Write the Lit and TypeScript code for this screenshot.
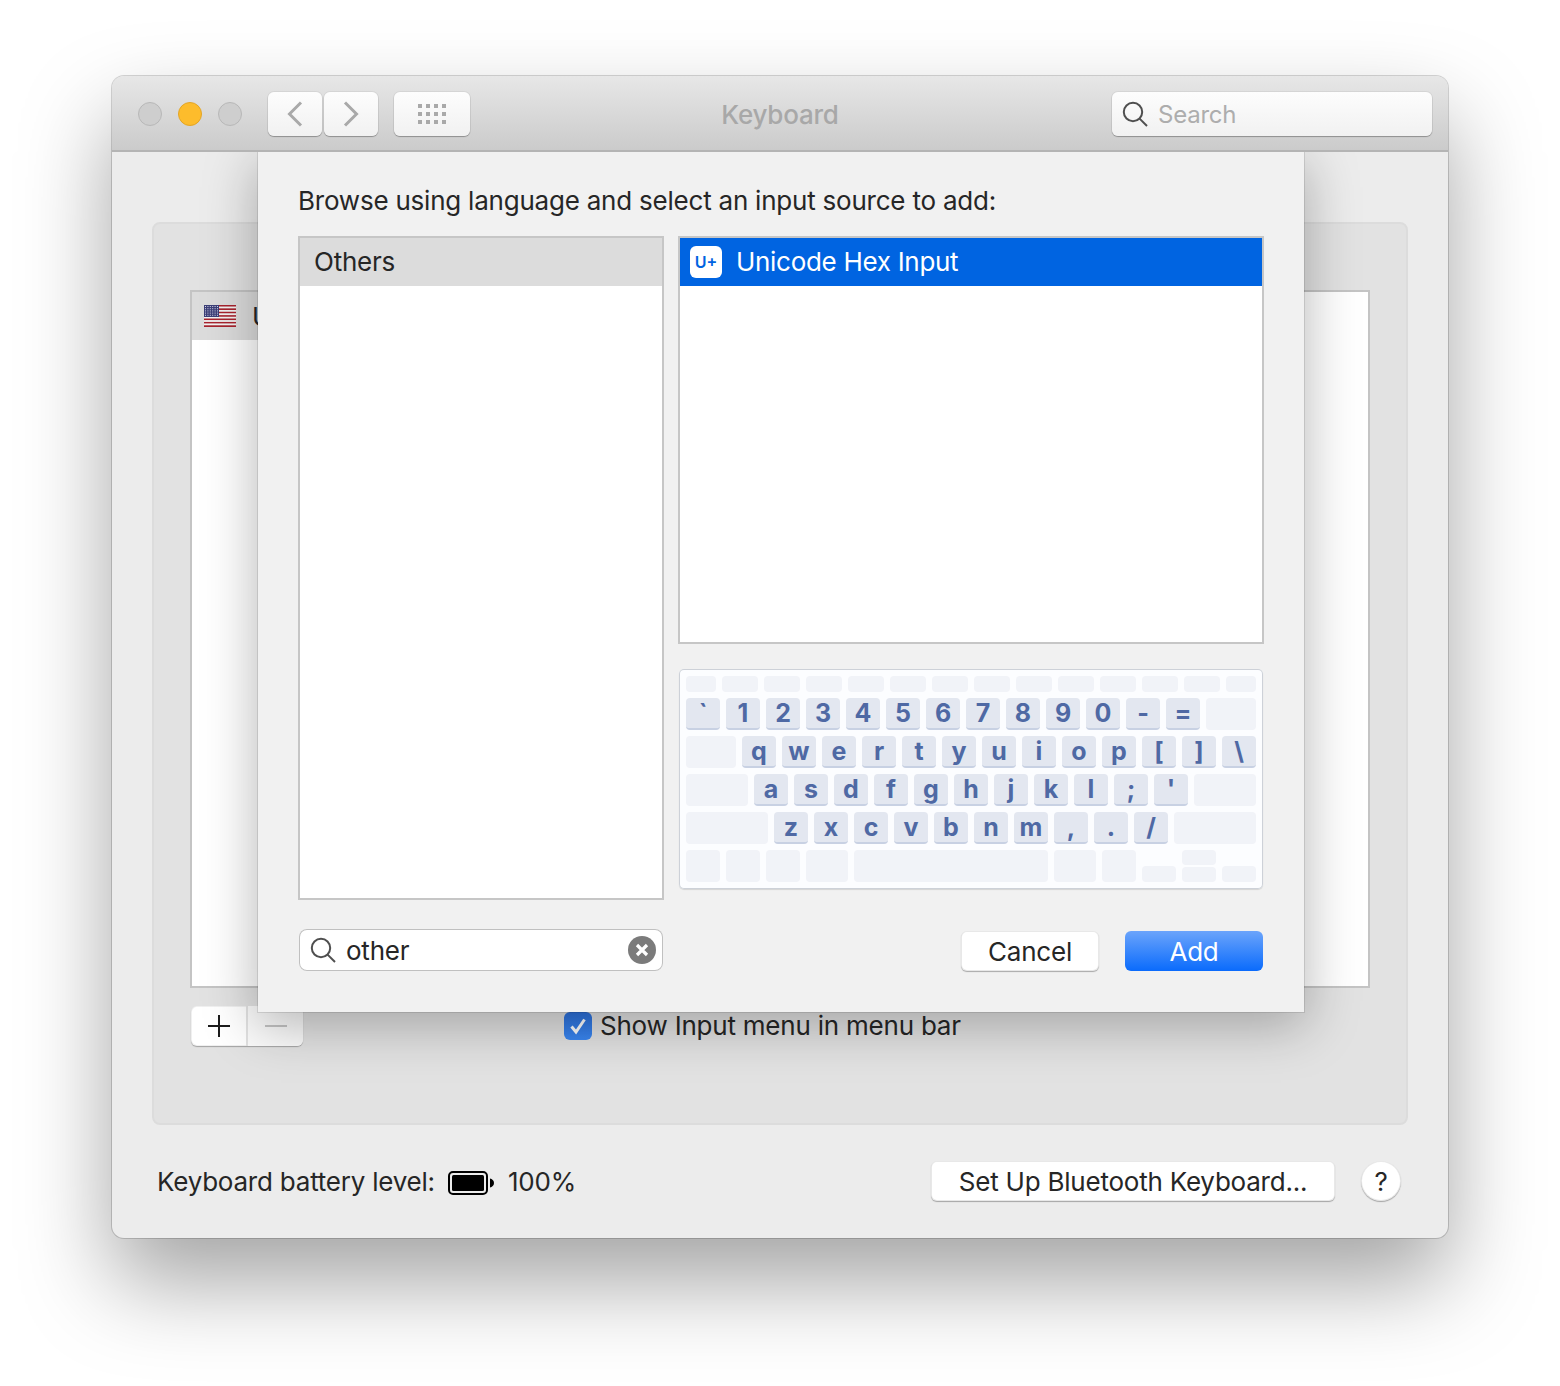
import { LitElement, html, css, svg } from "lit";
import { customElement } from "lit/decorators.js";

const mag = html`<svg class="mag" viewBox="0 0 26 26" width="26" height="26"><circle cx="11" cy="11" r="9.2" fill="none" stroke="#4f4f4f" stroke-width="2"/><path d="M17.6 17.6 25 25" fill="none" stroke="#4f4f4f" stroke-width="2"/></svg>`;

const stripes = Array.from({ length: 13 }, (_, i) =>
  svg`<rect x="0" y="${(i * 22) / 13}" width="32" height="${22 / 13}" fill="${i % 2 ? "#f4f2f2" : "#a8232e"}"/>`);
const stars: unknown[] = [];
for (let r = 0; r < 5; r++) for (let c = 0; c < 6; c++)
  stars.push(svg`<rect x="${1 + c * 2.4}" y="${1 + r * 2.2}" width="1" height="1" fill="#d8d8ea"/>`);
const flag = html`<svg class="flag" viewBox="0 0 32 22" width="32" height="22">${stripes}<rect width="15" height="12" fill="#3c3f78"/>${stars}</svg>`;

type K = [string, string];
const blank = (c: string): K => ["", c];
const keys = (s: string[]): K[] => s.map((t) => [t, "w34"] as K);
const rows: K[][] = [
  [blank("w30"), ...Array.from({ length: 12 }, () => blank("w36")), blank("w30")],
  [...keys(["`", "1", "2", "3", "4", "5", "6", "7", "8", "9", "0", "-", "="]), blank("w50")],
  [blank("w50"), ...keys(["q", "w", "e", "r", "t", "y", "u", "i", "o", "p", "[", "]", "\\"])],
  [blank("w62"), ...keys(["a", "s", "d", "f", "g", "h", "j", "k", "l", ";", "'"]), blank("w62")],
  [blank("w82"), ...keys(["z", "x", "c", "v", "b", "n", "m", ",", ".", "/"]), blank("w82")],
];

@customElement("app-root")
export class AppRoot extends LitElement {
  static styles = css`
    :host { display: block; background: #fff; padding: 76px 112px 148px; font-family: Inter, "Liberation Sans", sans-serif; color: #262626; font-size: 26px; letter-spacing: -0.22px; }
    * { box-sizing: border-box; }
    .window { position: relative; height: 1162px; border-radius: 12px; box-shadow: 0 0 0 1px rgba(0,0,0,.16), 0 44px 90px 0 rgba(0,0,0,.36); display: flex; flex-direction: column; background: #ececec; overflow: hidden; }
    .titlebar { flex: none; height: 76px; display: grid; grid-template-columns: 1fr auto 1fr; align-items: center; padding: 2px 16px 0; background: linear-gradient(#e7e7e7, #cbcbcb); border-bottom: 2px solid #b4b4b4; }
    .tb-left { display: flex; align-items: center; padding-left: 10px; }
    .lights { display: flex; gap: 16px; margin-right: 26px; }
    .light { width: 24px; height: 24px; border-radius: 50%; background: #cecece; border: 1px solid #b8b8b8; }
    .light.y { background: #fdbc2c; border-color: #e3a526; }
    .tbtn { height: 44px; background: linear-gradient(#fdfdfd, #f1f1f1); border-radius: 6px; box-shadow: 0 0 0 1px rgba(0,0,0,.05), 0 1px 1px rgba(0,0,0,.28); display: flex; align-items: center; justify-content: center; }
    .nav { display: flex; gap: 2px; margin-right: 16px; }
    .nav .tbtn { width: 54px; }
    .gridbtn { width: 76px; }
    .dots { display: grid; grid-template-columns: repeat(4, 4px); gap: 4px; }
    .dots i { width: 4px; height: 4px; background: #a9a9a9; }
    .title { color: #a8a8a8; font-weight: 500; }
    .search { justify-self: end; width: 320px; height: 44px; border-radius: 6px; background: linear-gradient(#fdfdfd, #f1f1f1); box-shadow: 0 0 0 1px rgba(0,0,0,.05), 0 1px 1px rgba(0,0,0,.28); display: flex; align-items: center; padding: 0 0 0 10px; gap: 10px; color: #adadad; font-size: 24px; }
    .body { position: relative; flex: 1; overflow: hidden; display: flex; flex-direction: column; }
    .panel { flex: none; height: 903px; margin: 70px 40px 0; padding: 66px 36px 0; background: #e2e2e2; border: 2px solid #dcdcdc; border-radius: 8px; }
    .list { height: 698px; background: #fff; border: 2px solid #c4c4c4; }
    .row { height: 48px; display: flex; align-items: center; background: #dcdcdc; }
    .panel .row { width: 300px; padding-left: 12px; gap: 16px; }
    .underlist { display: flex; align-items: center; margin-top: 18px; height: 40px; padding-left: 1px; }
    .seg { display: flex; width: 112px; height: 40px; border-radius: 6px; overflow: hidden; background: #fff; box-shadow: inset 0 0 0 1px rgba(0,0,0,.06), 0 1px 1px rgba(0,0,0,.28); margin-right: 261px; }
    .seg span { flex: 1; display: flex; align-items: center; justify-content: center; }
    .seg span + span { border-left: 2px solid #e2e2e2; background: #fbfbfb; }
    .check { display: flex; align-items: center; gap: 8px; }
    .check > span:last-child { position: relative; top: -1px; }
    .box { width: 28px; height: 28px; border-radius: 6px; background: linear-gradient(#2d71dc, #3a87f2); display: flex; align-items: center; justify-content: center; }
    .footer { flex: 1; display: flex; align-items: flex-start; padding: 36px 47px 0 45px; }
    .bat { display: flex; align-items: center; height: 40px; }
    .bat svg { margin: 3px 14px 0 13px; }
    .btn { height: 40px; background: #fff; border-radius: 6px; box-shadow: inset 0 0 0 1px rgba(0,0,0,.09), 0 1px 1px rgba(0,0,0,.3); display: flex; align-items: center; justify-content: center; }
    .bt { width: 404px; margin-left: auto; margin-right: 26px; }
    .help { width: 40px; height: 40px; border-radius: 50%; background: #fff; box-shadow: inset 0 0 0 1px rgba(0,0,0,.09), 0 1px 1px rgba(0,0,0,.3); display: flex; align-items: center; justify-content: center; }
    .sheet { position: absolute; left: 146px; top: 0; width: 1046px; height: 860px; background: #f1f1f1; padding: 32px 40px 0; box-shadow: 0 0 0 1px rgba(0,0,0,.1), 0 12px 50px 2px rgba(0,0,0,.28); }
    .prompt { height: 34px; line-height: 34px; margin-bottom: 18px; white-space: nowrap; }
    .cols { display: grid; grid-template-columns: 366px 586px; column-gap: 14px; }
    .src { height: 664px; background: #fff; border: 2px solid #c6c6c6; }
    .src .row { padding: 0 0 2px 14px; }
    .right { display: flex; flex-direction: column; }
    .src.r { height: 408px; }
    .src.r .row { background: #0064e1; color: #fff; padding: 0 0 2px 10px; gap: 14px; letter-spacing: -0.3px; }
    .uicon { width: 32px; height: 32px; margin-top: 2px; background: #fff; border-radius: 6px; color: #0064e1; font-size: 16px; font-weight: 600; letter-spacing: 0; display: flex; align-items: center; justify-content: center; }
    .kb { margin: 25px 1px 0; height: 220px; background: #fcfdff; border-radius: 5px; box-shadow: inset 0 0 0 1px #cdd1d8, 0 1px 1px rgba(0,0,0,.12); padding: 7px; display: flex; flex-direction: column; gap: 6px; }
    .kr { display: flex; gap: 6px; }
    .kr.top .k { height: 16px; }
    .k { flex: none; height: 32px; border-radius: 4px; background: #f1f3f8; display: flex; align-items: center; justify-content: center; }
    .k.on { background: #e3e7f0; border-bottom: 2px solid #c8d1e3; color: #4f69a4; font-weight: 700; font-size: 25px; line-height: 30px; letter-spacing: 0; }
    .w30 { width: 30px; } .w34 { width: 34px; } .w36 { width: 36px; } .w42 { width: 42px; } .w50 { width: 50px; } .w62 { width: 62px; } .w82 { width: 82px; } .w194 { width: 194px; }
    .arrow { flex: none; width: 34px; display: flex; flex-direction: column; justify-content: flex-end; gap: 2px; }
    .arrow .k { width: 34px; height: 15px; }
    .arrow .k.lr { height: 16px; }
    .bottom { display: grid; grid-template-columns: 366px 586px; column-gap: 14px; margin-top: 29px; height: 42px; align-items: start; }
    .sf { margin-left: 1px; width: 364px; height: 42px; background: #fff; border-radius: 8px; box-shadow: inset 0 0 0 1px #c0c0c0; display: flex; align-items: center; padding: 0 7px 0 11px; gap: 10px; }
    .sf b { font-weight: 400; flex: 1; }
    .acts { display: flex; justify-content: flex-end; gap: 26px; padding: 2px 1px 0 0; }
    .acts .btn { width: 138px; }
    .acts .btn.add { background: linear-gradient(#6ba4fb, #0a6bfc); color: #fff; box-shadow: none; }
  `;

  render() {
    return html`<div class="window">
      <div class="titlebar">
        <div class="tb-left">
          <div class="lights"><span class="light"></span><span class="light y"></span><span class="light"></span></div>
          <div class="nav">
            <div class="tbtn"><svg width="16" height="26" viewBox="0 0 16 26"><path d="M14 1.500 2.500 13 14 24.500" fill="none" stroke="#a9a9a9" stroke-width="3"/></svg></div>
            <div class="tbtn"><svg width="16" height="26" viewBox="0 0 16 26"><path d="M2 1.500 13.500 13 2 24.500" fill="none" stroke="#a9a9a9" stroke-width="3"/></svg></div>
          </div>
          <div class="tbtn gridbtn"><div class="dots">${Array.from({ length: 12 }, () => html`<i></i>`)}</div></div>
        </div>
        <div class="title">Keyboard</div>
        <div class="search">${mag}<span>Search</span></div>
      </div>
      <div class="body">
        <div class="panel">
          <div class="list"><div class="row">${flag}<span>U.S.</span></div></div>
          <div class="underlist">
            <div class="seg">
              <span><svg width="24" height="24" viewBox="0 0 24 24"><path d="M12 1v22M1 12h22" stroke="#1c1c1c" stroke-width="2"/></svg></span>
              <span><svg width="24" height="24" viewBox="0 0 24 24"><path d="M1 12h22" stroke="#c4c4c4" stroke-width="2"/></svg></span>
            </div>
            <div class="check">
              <span class="box"><svg width="20" height="20" viewBox="0 0 20 20"><path d="M3.500 10.500 8 16 16.500 3.500" fill="none" stroke="#fff" stroke-width="3"/></svg></span>
              <span>Show Input menu in menu bar</span>
            </div>
          </div>
        </div>
        <div class="footer">
          <div class="bat">Keyboard battery level:
            <svg width="46" height="24" viewBox="0 0 46 24"><rect x="1" y="1" width="38" height="22" rx="4" fill="none" stroke="#000" stroke-width="2"/><rect x="4" y="4" width="32" height="16" rx="1.500" fill="#000"/><path d="M42 7.500c2 .5 4 2 4 4.500s-2 4-4 4.500z" fill="#000"/></svg>
            100%</div>
          <div class="btn bt">Set Up Bluetooth Keyboard...</div>
          <div class="help">?</div>
        </div>
        <div class="sheet">
          <div class="prompt">Browse using language and select an input source to add:</div>
          <div class="cols">
            <div class="src"><div class="row">Others</div></div>
            <div class="right">
              <div class="src r"><div class="row"><span class="uicon">U+</span>Unicode Hex Input</div></div>
              <div class="kb">
                ${rows.map((r, i) => html`<div class="kr ${i === 0 ? "top" : ""}">${r.map(([t, c]) => html`<div class="k ${c} ${t ? "on" : ""}">${t}</div>`)}</div>`)}
                <div class="kr">
                  <div class="k w34"></div><div class="k w34"></div><div class="k w34"></div><div class="k w42"></div>
                  <div class="k w194"></div><div class="k w42"></div><div class="k w34"></div>
                  <div class="arrow"><div class="k lr"></div></div>
                  <div class="arrow"><div class="k"></div><div class="k"></div></div>
                  <div class="arrow"><div class="k lr"></div></div>
                </div>
              </div>
            </div>
          </div>
          <div class="bottom">
            <div class="sf">${mag}<b>other</b>
              <svg width="28" height="28" viewBox="0 0 28 28"><circle cx="14" cy="14" r="14" fill="#7b7b7b"/><path d="M9 9l10 10M19 9 9 19" stroke="#fff" stroke-width="3.200"/></svg>
            </div>
            <div class="acts"><div class="btn">Cancel</div><div class="btn add">Add</div></div>
          </div>
        </div>
      </div>
    </div>`;
  }
}
